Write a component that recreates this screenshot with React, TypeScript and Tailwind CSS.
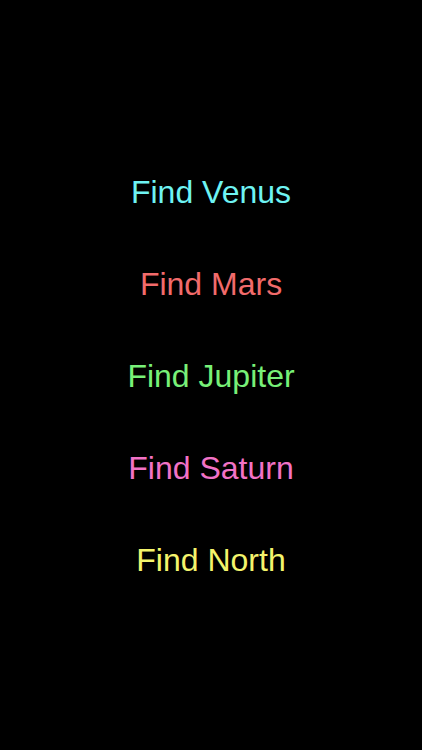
export default function App() {
  return (
    <div className="w-[422px] h-[750px] bg-black flex flex-col items-center justify-center pt-[3px] font-['Liberation_Sans',Arial,sans-serif]">
      <div className="flex flex-col items-center gap-[55px]">
        <div className="text-[32px] leading-[37px] text-[#6ef3f3]">Find Venus</div>
        <div className="text-[32px] leading-[37px] text-[#f26b6b]">Find Mars</div>
        <div className="text-[32px] leading-[37px] text-[#78f078]">Find Jupiter</div>
        <div className="text-[32px] leading-[37px] text-[#f272c6]">Find Saturn</div>
        <div className="text-[32px] leading-[37px] text-[#f4f46c]">Find North</div>
      </div>
    </div>
  );
}
